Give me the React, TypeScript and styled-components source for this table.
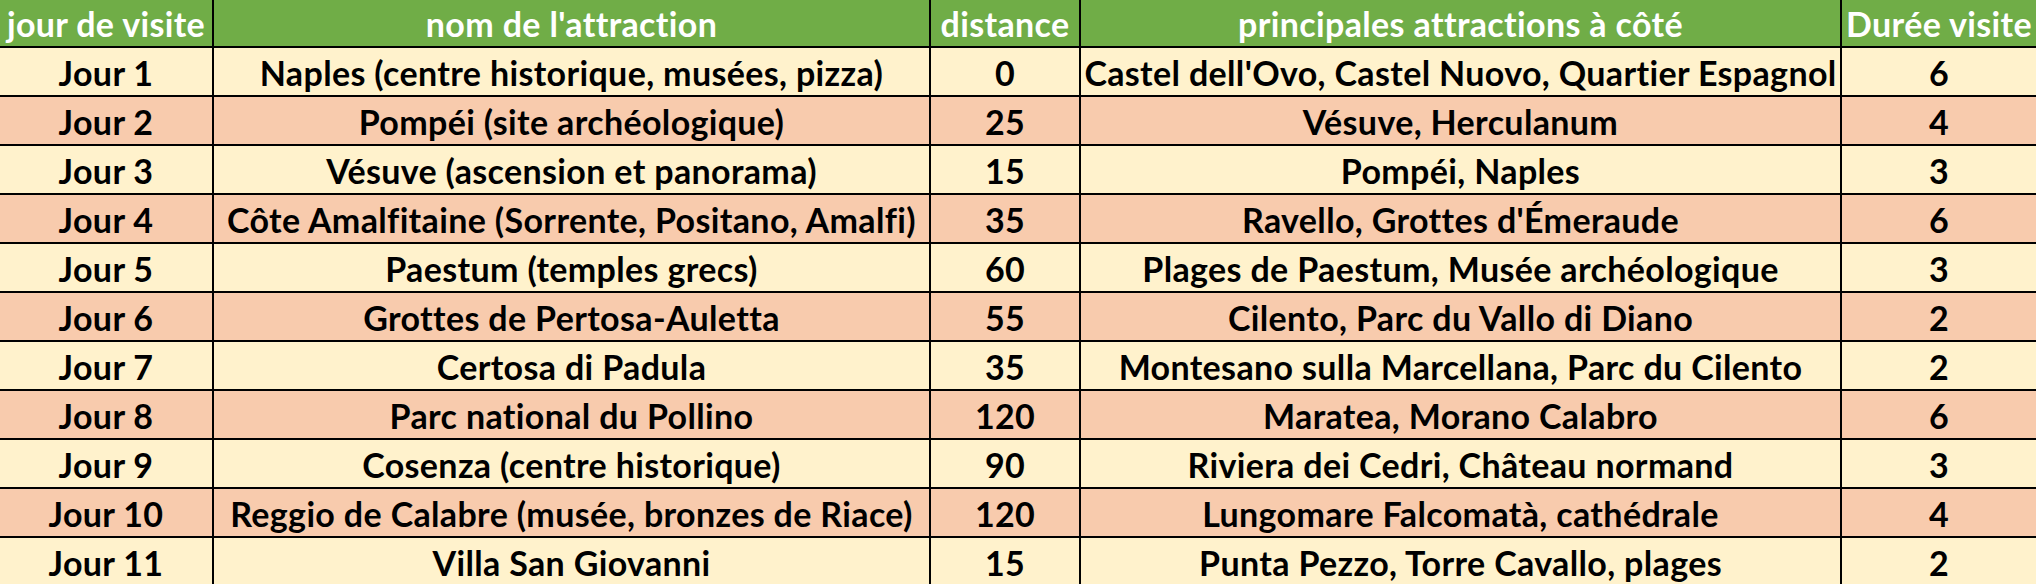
import React from "react";
import styled, { createGlobalStyle } from "styled-components";

const Global = createGlobalStyle`
  html, body { margin: 0; padding: 0; background: #ffffff; }
  body { font-family: Lato, "Open Sans", sans-serif; }
`;

const Sheet = styled.div`
  display: grid;
  grid-template-columns: 212px 715px 148px 759px 194px;
  grid-template-rows: 46px;
  grid-auto-rows: 47px;
  gap: 2px;
  background: #000000;
  width: 2036px;
  overflow: hidden;
`;

const Cell = styled.div<{ $tone: "head" | "light" | "dark" }>`
  display: flex;
  align-items: center;
  justify-content: center;
  white-space: nowrap;
  overflow: hidden;
  font-family: Lato, "Open Sans", sans-serif;
  font-weight: 700;
  font-size: 34px;
  letter-spacing: 0.35px;
  line-height: 1;
  padding-top: 2px;
  box-sizing: border-box;
  color: ${(p) => (p.$tone === "head" ? "#ffffff" : "#000000")};
  background: ${(p) =>
    p.$tone === "head" ? "#70ad47" : p.$tone === "light" ? "#fff2cc" : "#f8cbad"};
`;

const headers = [
  "jour de visite",
  "nom de l'attraction",
  "distance",
  "principales attractions à côté",
  "Durée visite",
];

const rows: [string, string, string, string, string][] = [
  ["Jour 1", "Naples (centre historique, musées, pizza)", "0", "Castel dell'Ovo, Castel Nuovo, Quartier Espagnol", "6"],
  ["Jour 2", "Pompéi (site archéologique)", "25", "Vésuve, Herculanum", "4"],
  ["Jour 3", "Vésuve (ascension et panorama)", "15", "Pompéi, Naples", "3"],
  ["Jour 4", "Côte Amalfitaine (Sorrente, Positano, Amalfi)", "35", "Ravello, Grottes d'Émeraude", "6"],
  ["Jour 5", "Paestum (temples grecs)", "60", "Plages de Paestum, Musée archéologique", "3"],
  ["Jour 6", "Grottes de Pertosa-Auletta", "55", "Cilento, Parc du Vallo di Diano", "2"],
  ["Jour 7", "Certosa di Padula", "35", "Montesano sulla Marcellana, Parc du Cilento", "2"],
  ["Jour 8", "Parc national du Pollino", "120", "Maratea, Morano Calabro", "6"],
  ["Jour 9", "Cosenza (centre historique)", "90", "Riviera dei Cedri, Château normand", "3"],
  ["Jour 10", "Reggio de Calabre (musée, bronzes de Riace)", "120", "Lungomare Falcomatà, cathédrale", "4"],
  ["Jour 11", "Villa San Giovanni", "15", "Punta Pezzo, Torre Cavallo, plages", "2"],
];

export default function App() {
  return (
    <>
      <Global />
      <Sheet>
        {headers.map((h) => (
          <Cell key={h} $tone="head">
            {h}
          </Cell>
        ))}
        {rows.map((r, i) =>
          r.map((c, j) => (
            <Cell key={`${i}-${j}`} $tone={i % 2 === 0 ? "light" : "dark"}>
              {c}
            </Cell>
          ))
        )}
      </Sheet>
    </>
  );
}
